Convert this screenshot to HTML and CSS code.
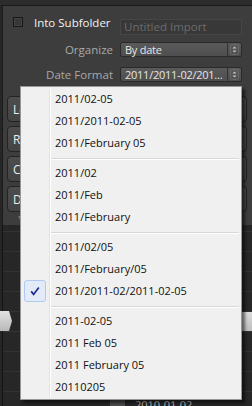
FILE: index.html
```html
<!DOCTYPE html>
<html lang="en">
<head>
  <meta charset="UTF-8">
  <title>Import - Date Format</title>
  <link rel="stylesheet" href="styles.css">
</head>
<body>
  <div class="topstrip"></div>
  <div class="panel">
    <div class="opts">
      <label class="check-row">
        <span class="checkbox"></span>
        <span class="check-label">Into Subfolder</span>
      </label>
      <div class="field">
        <input class="textbox" type="text" placeholder="Untitled Import">
      </div>

      <div class="label">Organize</div>
      <div class="field">
        <div class="select">
          <span class="select-value">By date</span>
          <span class="spin">
            <svg width="9" height="11" viewBox="0 0 9 11"><rect x="0.5" y="0.5" width="8" height="10" rx="2" fill="none" stroke="#6a6a6a"/><path d="M2.5 4.5 L4.5 2.5 L6.5 4.5 Z M2.5 6.5 L4.5 8.5 L6.5 6.5 Z" fill="#c8c8c8"/></svg>
          </span>
        </div>
      </div>

      <div class="label">Date Format</div>
      <div class="field">
        <div class="select">
          <span class="select-value">2011/2011-02/201...</span>
          <span class="spin">
            <svg width="9" height="11" viewBox="0 0 9 11"><rect x="0.5" y="0.5" width="8" height="10" rx="2" fill="none" stroke="#6a6a6a"/><path d="M2.5 4.5 L4.5 2.5 L6.5 4.5 Z M2.5 6.5 L4.5 8.5 L6.5 6.5 Z" fill="#c8c8c8"/></svg>
          </span>
        </div>
      </div>
    </div>

    <div class="buttons">
      <button class="btn"><span class="btn-text">Lo</span></button>
      <button class="btn"><span class="btn-text">Re</span></button>
      <button class="btn"><span class="btn-text">C</span></button>
      <button class="btn"><span class="btn-text">D</span></button>
    </div>
    <div class="caret">&#9662;</div>
  </div>

  <div class="list">
    <div class="row"></div>
    <div class="row"></div>
    <div class="row"></div>
    <div class="row"></div>
    <div class="row selected"><span class="marker"></span><span class="bar"></span></div>
    <div class="row"></div>
    <div class="row"></div>
    <div class="row"></div>
    <div class="row last"><span class="tree"></span><span class="date">2010-01-02</span></div>
  </div>

  <div class="menu">
    <div class="item">2011/02-05</div>
    <div class="item">2011/2011-02-05</div>
    <div class="item">2011/February 05</div>
    <div class="sep"></div>
    <div class="item">2011/02</div>
    <div class="item">2011/Feb</div>
    <div class="item">2011/February</div>
    <div class="sep"></div>
    <div class="item">2011/02/05</div>
    <div class="item">2011/February/05</div>
    <div class="item checked">
      <span class="tick">
        <svg width="12" height="12" viewBox="0 0 12 12"><path d="M2.2 6.4 L4.6 9.4 L9.8 2.4" fill="none" stroke="#1b2a8c" stroke-width="1.7"/></svg>
      </span>
      2011/2011-02/2011-02-05
    </div>
    <div class="sep"></div>
    <div class="item">2011-02-05</div>
    <div class="item">2011 Feb 05</div>
    <div class="item">2011 February 05</div>
    <div class="item">20110205</div>
  </div>
</body>
</html>
```

FILE: styles.css
```css
body {
  margin: 0;
  width: 252px;
  height: 406px;
  overflow: hidden;
  position: relative;
  background-color: #262626;
  font-family: "Open Sans", "Liberation Sans", sans-serif;
}

.topstrip {
  height: 5px;
  background-color: #2c2c2c;
}

.panel {
  margin-left: 2px;
  border-top: 1px solid #1b1b1b;
  border-left: 1px solid #1b1b1b;
  background-color: #3d3d3d;
  height: 219px;
}

.opts {
  display: grid;
  grid-template-columns: 110px 122px;
  column-gap: 7px;
  padding-top: 8px;
}

.check-row {
  display: flex;
  align-items: center;
  padding-left: 10px;
  height: 16px;
}

.checkbox {
  width: 8px;
  height: 8px;
  border: 1px solid #161616;
  background-color: #373737;
  box-shadow: inset 0 0 0 1px #444;
}

.check-label {
  margin-left: 11px;
  color: #f2f2f2;
  font-size: 11.5px;
}

.field {
  height: 16px;
}

.textbox {
  box-sizing: border-box;
  width: 122px;
  height: 16px;
  margin: 0;
  padding: 0 0 0 3px;
  border: 1px solid #464646;
  background-color: #383838;
  font-family: "Open Sans", "Liberation Sans", sans-serif;
  font-size: 11.5px;
  color: #ddd;
  outline: none;
}

.textbox::placeholder {
  color: #6c6c6c;
}

.label {
  text-align: right;
  color: #a9a9a9;
  font-size: 11.5px;
  line-height: 15px;
}

.opts > :nth-child(3),
.opts > :nth-child(4) {
  margin-top: 12px;
}

.opts > :nth-child(5),
.opts > :nth-child(6) {
  margin-top: 9px;
}

.select {
  box-sizing: border-box;
  height: 15px;
  display: flex;
  border: 1px solid #2a2a2a;
  border-radius: 2px;
  background: linear-gradient(#5a5a5a, #4e4e4e);
}

.select-value {
  flex: 1;
  min-width: 0;
  padding-left: 4px;
  color: #e6e6e6;
  font-size: 11px;
  letter-spacing: -0.25px;
  line-height: 13px;
  white-space: nowrap;
}

.spin {
  width: 13px;
  flex: none;
  border-left: 1px solid #333;
  display: flex;
  align-items: center;
  justify-content: center;
}

.buttons {
  display: flex;
  flex-direction: column;
  gap: 4px;
  margin: 13px 5px 0 4px;
}

.btn {
  height: 26px;
  margin: 0;
  padding: 0 0 0 5px;
  text-align: left;
  border: 1px solid #232323;
  border-radius: 4px;
  background: linear-gradient(#4d4d4d, #444);
  color: #ececec;
  font-family: "Open Sans", "Liberation Sans", sans-serif;
  font-size: 12px;
}

.caret {
  margin: 0 0 0 15px;
  color: #777;
  font-size: 8px;
  line-height: 9px;
}

.list {
  margin-left: 2px;
  border-left: 1px solid #141414;
  padding-top: 6px;
}

.row {
  height: 19px;
  border-top: 1px solid #333;
  background-color: #272727;
  display: flex;
}

.row.selected {
  margin-left: -3px;
}

.marker {
  width: 12px;
  height: 20px;
  margin-top: -1px;
  background: linear-gradient(#e2e2e2, #b8b8b8);
  clip-path: polygon(0 0, 9px 0, 12px 50%, 9px 100%, 0 100%);
}

.bar {
  flex: 1;
  margin-left: 8px;
  height: 19px;
  background: linear-gradient(#dcdcdc, #bdbdbd);
}

.tree {
  width: 15px;
  margin-left: 107px;
  background-color: #4e4e4e;
}

.date {
  margin-left: 10px;
  padding-top: 5px;
  color: #c4c4c4;
  font-size: 11px;
}

.menu {
  position: absolute;
  left: 20px;
  top: 86px;
  width: 222px;
  box-sizing: border-box;
  padding: 1px;
  border: 1px solid #979797;
  background-color: #f0f0f0;
  box-shadow: 3px 3px 3px rgba(0, 0, 0, 0.55);
  font-family: "Open Sans", "Liberation Sans", sans-serif;
  font-size: 11px;
  color: #111;
}

.menu::before {
  content: "";
  position: absolute;
  left: 28px;
  top: 2px;
  bottom: 2px;
  width: 1px;
  background-color: #e2e3e3;
  border-right: 1px solid #fff;
}

.item {
  position: relative;
  height: 22px;
  line-height: 22px;
  padding-left: 33px;
}

.sep {
  height: 8px;
  margin-left: 29px;
  margin-right: 1px;
  position: relative;
}

.sep::after {
  content: "";
  position: absolute;
  left: 0;
  right: 0;
  top: 4px;
  height: 1px;
  background-color: #d7d7d7;
  border-bottom: 1px solid #fff;
}

.tick {
  position: absolute;
  left: 2px;
  top: 0;
  width: 20px;
  height: 20px;
  border: 1px solid #aecaf0;
  border-radius: 3px;
  background-color: #e3ebf8;
  display: flex;
  align-items: center;
  justify-content: center;
}
```
